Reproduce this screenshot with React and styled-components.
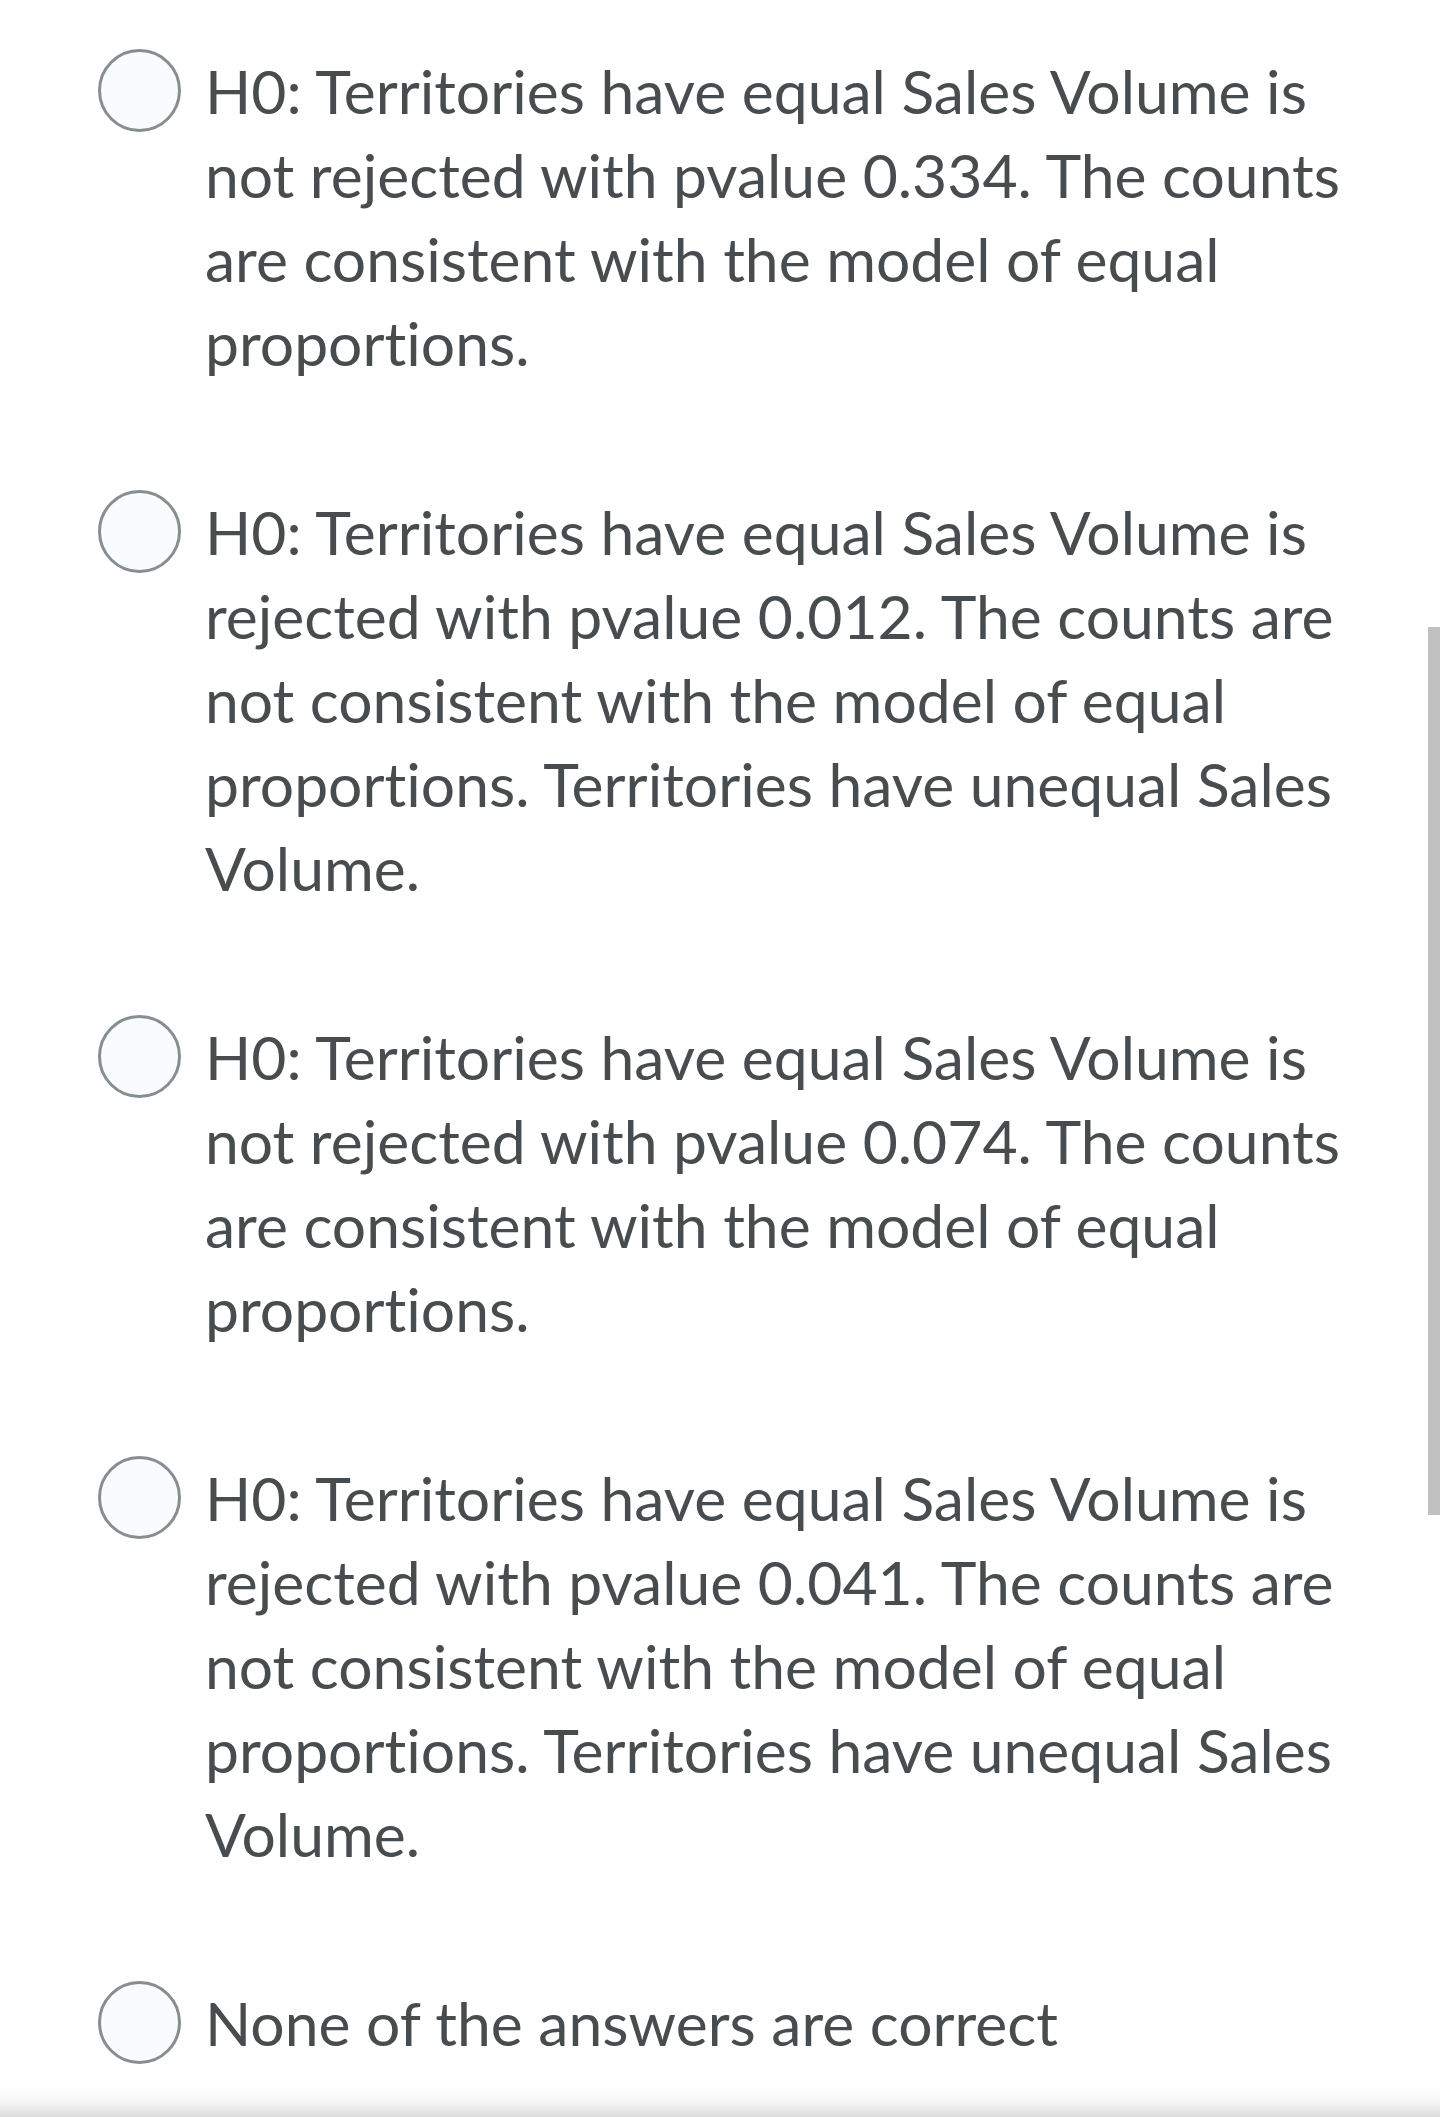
import React from 'react';
import styled, { createGlobalStyle } from 'styled-components';

const GlobalStyle = createGlobalStyle`
  html, body {
    margin: 0;
    padding: 0;
    background: #ffffff;
  }
  body {
    font-family: Lato, "Open Sans", sans-serif;
    overflow: hidden;
  }
`

const Page = styled.div`
  position: relative;
  width: 1440px;
  height: 2117px;
  overflow: hidden;
  background: #ffffff;
`

const OptionList = styled.div`
  display: flex;
  flex-direction: column;
  gap: 105px;
  padding: 49px 70px 0 98px;
`

const Option = styled.label`
  display: flex;
  align-items: flex-start;
  gap: 24px;
  cursor: pointer;
`

const Radio = styled.span`
  flex: none;
  box-sizing: border-box;
  width: 83px;
  height: 83px;
  border-radius: 50%;
  border: 3px solid #878d90;
  background: #f9fbff;
`

const OptionText = styled.span`
  font-family: Lato, "Open Sans", sans-serif;
  font-size: 60.6px;
  line-height: 84px;
  color: #494c4e;
  font-variant-ligatures: none;
  font-feature-settings: "liga" 0, "dlig" 0;
`

const ScrollThumb = styled.div`
  position: absolute;
  top: 627px;
  right: 0;
  width: 12px;
  height: 888px;
  background: #c1c1c1;
`

const BottomFade = styled.div`
  position: absolute;
  left: 0;
  right: 0;
  bottom: 0;
  height: 30px;
  background: linear-gradient(to bottom, rgba(255,255,255,0), #f4f4f4 55%, #dcdcdc);
`

const options = [
  'H0: Territories have equal Sales Volume is not rejected with pvalue 0.334. The counts are consistent with the model of equal proportions.',
  'H0: Territories have equal Sales Volume is rejected with pvalue 0.012. The counts are not consistent with the model of equal proportions. Territories have unequal Sales Volume.',
  'H0: Territories have equal Sales Volume is not rejected with pvalue 0.074. The counts are consistent with the model of equal proportions.',
  'H0: Territories have equal Sales Volume is rejected with pvalue 0.041. The counts are not consistent with the model of equal proportions. Territories have unequal Sales Volume.',
  'None of the answers are correct',
];

export default function App() {
  return (
    <Page>
      <GlobalStyle />
      <OptionList>
        {options.map((text, i) => (
          <Option key={i}>
            <Radio />
            <OptionText>{text}</OptionText>
          </Option>
        ))}
      </OptionList>
      <ScrollThumb />
      <BottomFade />
    </Page>
  );
}
